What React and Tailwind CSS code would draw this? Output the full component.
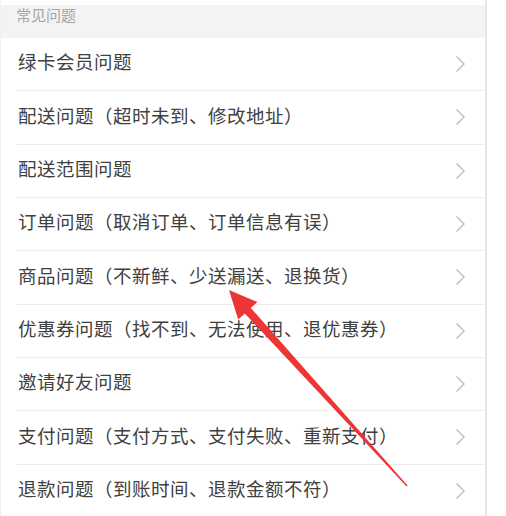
const ITEMS = [
  '绿卡会员问题',
  '配送问题（超时未到、修改地址）',
  '配送范围问题',
  '订单问题（取消订单、订单信息有误）',
  '商品问题（不新鲜、少送漏送、退换货）',
  '优惠券问题（找不到、无法使用、退优惠券）',
  '邀请好友问题',
  '支付问题（支付方式、支付失败、重新支付）',
  '退款问题（到账时间、退款金额不符）',
];

function Chevron() {
  return (
    <svg width="11" height="18" viewBox="0 0 11 18" className="shrink-0">
      <polyline points="1.5,1.5 9,9 1.5,16.5" fill="none" stroke="#bdbdbd" strokeWidth="1.4" />
    </svg>
  );
}

export default function App() {
  return (
    <div
      className="relative h-[516px] w-[506px] overflow-hidden bg-white"
      style={{ fontFamily: '"Noto Sans CJK SC", "Noto Sans", sans-serif' }}
    >
      <div className="flex h-full">
        <div className="w-[485px] border-l border-[#f0f0f0]">
          <div className="h-[5px] bg-white" />
          {/* 标题栏 */}
          <div className="h-[33px] bg-[#f3f3f3] pl-[15px] text-[15px] leading-[20px] text-[#a6a6a6]">
            常见问题
          </div>
          {ITEMS.map((t) => (
            <div key={t} className="pl-4">
              <div className="flex h-[53.33px] items-center justify-between border-b border-[#ececec] pr-[19px]">
                <span className="pb-[4px] pl-[1px] text-[18.5px] tracking-[0.5px] text-[#404040]">{t}</span>
                <Chevron />
              </div>
            </div>
          ))}
        </div>
        <div className="w-[2px] bg-[#e6e6e6]" />
        <div className="flex-1 bg-white" />
      </div>

      {/* 红色箭头标注 */}
      <svg className="pointer-events-none absolute inset-0" width="506" height="516">
        <polygon
          points="229,290 257.4,302 250.8,308 407.6,485.6 406.6,486.4 244.8,313.4 238.2,319.4"
          fill="#ee3535"
        />
      </svg>
    </div>
  );
}
